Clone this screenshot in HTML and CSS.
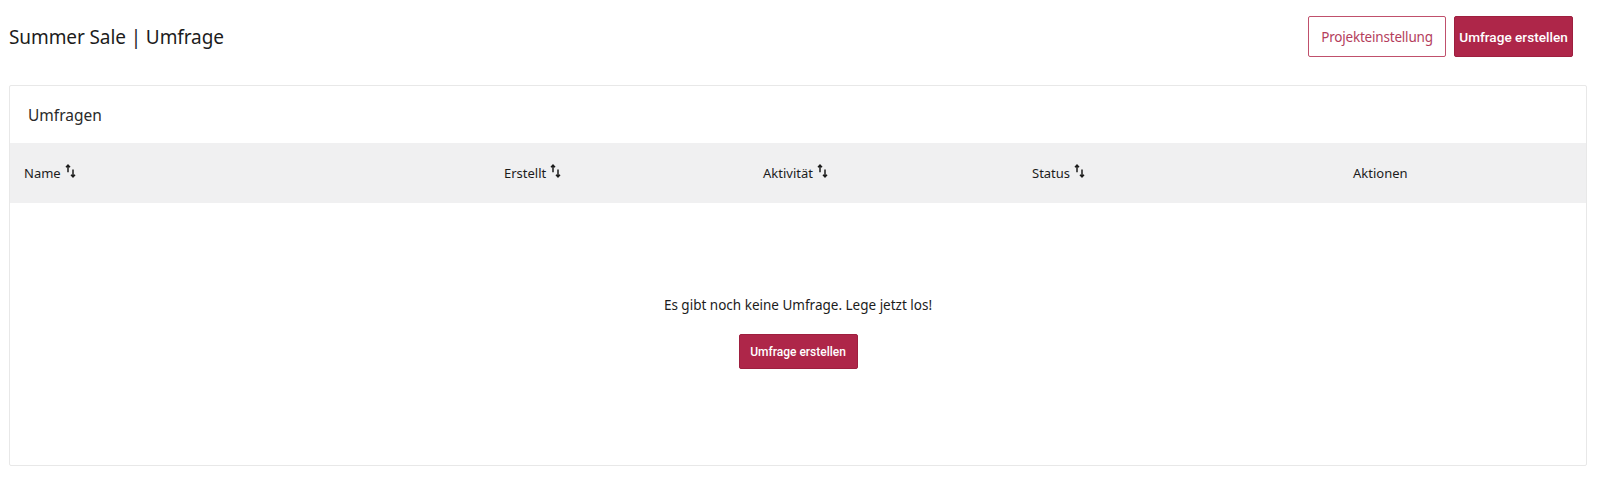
FILE: index.html
```html
<!DOCTYPE html>
<html lang="de">
<head>
<meta charset="utf-8">
<title>Summer Sale | Umfrage</title>
<link rel="stylesheet" href="styles.css">
</head>
<body>
<div class="page">
  <header class="topbar">
    <h1 class="title">Summer Sale | Umfrage</h1>
    <div class="actions">
      <button class="btn btn-outline">Projekteinstellung</button>
      <button class="btn btn-primary btn-top">Umfrage erstellen</button>
    </div>
  </header>
  <section class="card">
    <div class="card-head">Umfragen</div>
    <div class="thead">
      <div class="th col-name">Name <svg class="sort" viewBox="0 0 11 14" width="11" height="14"><path d="M3 1.2v7M1 3.3L3 1.2l2 2.1" fill="none" stroke="#1c1c1c" stroke-width="1.5"/><path d="M8 5.5v7.3M6 10.7l2 2.1 2-2.1" fill="none" stroke="#1c1c1c" stroke-width="1.5"/></svg></div>
      <div class="th col-created">Erstellt <svg class="sort" viewBox="0 0 11 14" width="11" height="14"><path d="M3 1.2v7M1 3.3L3 1.2l2 2.1" fill="none" stroke="#1c1c1c" stroke-width="1.5"/><path d="M8 5.5v7.3M6 10.7l2 2.1 2-2.1" fill="none" stroke="#1c1c1c" stroke-width="1.5"/></svg></div>
      <div class="th col-activity">Aktivität <svg class="sort" viewBox="0 0 11 14" width="11" height="14"><path d="M3 1.2v7M1 3.3L3 1.2l2 2.1" fill="none" stroke="#1c1c1c" stroke-width="1.5"/><path d="M8 5.5v7.3M6 10.7l2 2.1 2-2.1" fill="none" stroke="#1c1c1c" stroke-width="1.5"/></svg></div>
      <div class="th col-status">Status <svg class="sort" viewBox="0 0 11 14" width="11" height="14"><path d="M3 1.2v7M1 3.3L3 1.2l2 2.1" fill="none" stroke="#1c1c1c" stroke-width="1.5"/><path d="M8 5.5v7.3M6 10.7l2 2.1 2-2.1" fill="none" stroke="#1c1c1c" stroke-width="1.5"/></svg></div>
      <div class="th col-actions">Aktionen</div>
    </div>
    <div class="empty">
      <p class="empty-text">Es gibt noch keine Umfrage. Lege jetzt los!</p>
      <button class="btn btn-primary btn-small">Umfrage erstellen</button>
    </div>
  </section>
</div>
</body>
</html>
```

FILE: styles.css
```css
* { box-sizing: border-box; }
html, body { margin: 0; padding: 0; background: #fff; }
body {
  font-family: "Noto Sans", "Open Sans", sans-serif;
  color: #1c1c1c;
}
.page { padding: 16px 13px 0 9px; }
.topbar {
  display: flex;
  align-items: center;
  justify-content: space-between;
  height: 41px;
  padding-right: 14px;
}
.title {
  margin: 0;
  font-size: 19px;
  font-weight: 400;
  letter-spacing: -0.1px;
}
.actions { display: flex; gap: 8px; }
.btn {
  font-family: inherit;
  font-size: 13.5px;
  height: 41px;
  padding: 0;
  border-radius: 2px;
  cursor: pointer;
  white-space: nowrap;
}
.btn-outline {
  background: #fff;
  color: #b43d5c;
  border: 1px solid #c0506c;
  width: 138px;
  letter-spacing: -0.2px;
}
.btn-primary {
  background: #ae2649;
  color: #fff;
  border: 1px solid #9e1f3f;
  font-family: "Roboto", "Noto Sans", sans-serif;
  font-weight: 500;
  font-size: 13px;
  width: 119px;
}
.btn-top { font-size: 13.6px; }
.btn-small {
  height: 35px;
  width: 119px;
  font-size: 12px;
}
.card {
  margin-top: 28px;
  border: 1px solid #e8e8e8;
  border-radius: 2px;
}
.card-head {
  height: 57px;
  display: flex;
  align-items: center;
  padding-left: 18px;
  font-size: 15.5px;
  color: #2a2a2a;
}
.thead {
  display: grid;
  grid-template-columns: 480px 259px 269px 321px 1fr;
  height: 60px;
  align-items: center;
  background: #f0f0f1;
  font-size: 13px;
  color: #1c1c1c;
}
.th { display: flex; align-items: center; gap: 4px; padding-left: 14px; }
.sort { margin-top: -4px; }
.empty {
  height: 262px;
  display: flex;
  flex-direction: column;
  align-items: center;
  padding-top: 93px;
}
.empty-text {
  margin: 0 0 20px;
  font-size: 13.5px;
  color: #1c1c1c;
}
```
